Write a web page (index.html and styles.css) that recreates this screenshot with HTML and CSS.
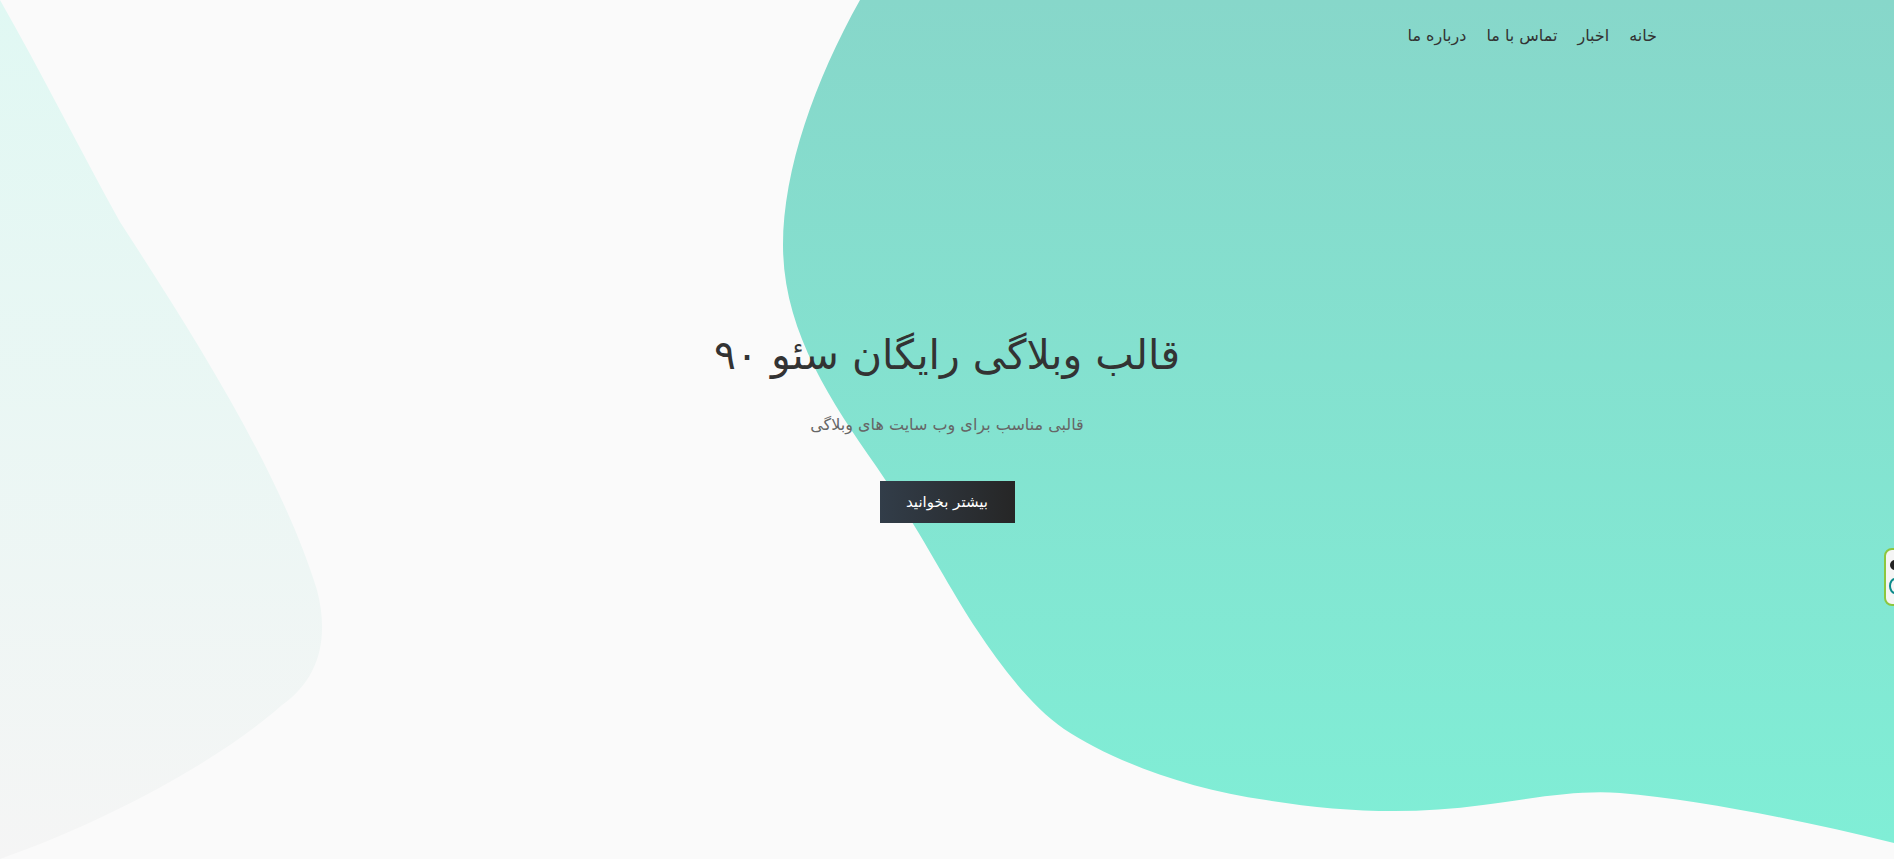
FILE: index.html
```html
<!DOCTYPE html>
<html lang="fa" dir="rtl">
<head>
<meta charset="utf-8">
<title>قالب وبلاگی رایگان سئو ۹۰</title>
<link rel="stylesheet" href="styles.css">
</head>
<body>
<div class="page">
  <svg class="bg" viewBox="0 0 1894 859" preserveAspectRatio="none" aria-hidden="true">
    <defs>
      <linearGradient id="g1" x1="0" y1="0" x2="0" y2="1">
        <stop offset="0" stop-color="#87d7ca"/>
        <stop offset="1" stop-color="#80eed6"/>
      </linearGradient>
      <linearGradient id="g2" x1="0" y1="0" x2="0" y2="1">
        <stop offset="0" stop-color="#e0f8f3"/>
        <stop offset="1" stop-color="#f5f5f5"/>
      </linearGradient>
    </defs>
    <path fill="url(#g2)" d="M0,0 C40,70 80,150 120,222 C190,330 280,470 317,590 C330,640 318,680 282,705 C220,760 110,820 0,859 Z"/>
    <path fill="url(#g1)" d="M860,0 C815,80 783,170 783,245 C783,330 830,400 876,466 C920,530 950,590 977,630 C1000,665 1030,705 1064,729 C1110,760 1190,790 1266,800 C1340,812 1410,815 1483,805 C1540,797 1580,790 1620,793 C1700,800 1800,820 1894,843 L1894,0 Z"/>
  </svg>

  <header class="header">
    <nav class="nav">
      <a href="#" class="nav-link">خانه</a>
      <a href="#" class="nav-link">اخبار</a>
      <a href="#" class="nav-link">تماس با ما</a>
      <a href="#" class="nav-link">درباره ما</a>
    </nav>
  </header>

  <main class="hero">
    <h1 class="hero-title">قالب وبلاگی رایگان سئو ۹۰</h1>
    <p class="hero-sub">قالبی مناسب برای وب سایت های وبلاگی</p>
    <a href="#" class="btn">بیشتر بخوانید</a>
  </main>

  <div class="widget" aria-hidden="true">
    <span class="widget-dot"></span>
    <span class="widget-c"></span>
  </div>
</div>
</body>
</html>
```

FILE: styles.css
```css
* { box-sizing: border-box; }
html, body {
  margin: 0;
  padding: 0;
  height: 100%;
}
body {
  background: #fafafa;
  font-family: "DejaVu Sans", "Noto Sans", sans-serif;
  color: #333;
  overflow: hidden;
}
.page {
  position: relative;
  height: 859px;
  overflow: hidden;
}
.bg {
  position: absolute;
  left: 0;
  top: 0;
  width: 100%;
  height: 100%;
  z-index: 0;
}
.header {
  position: relative;
  z-index: 1;
  max-width: 1420px;
  margin: 0 auto;
  padding-top: 25px;
}
.nav {
  display: flex;
  gap: 20px;
}
.nav-link {
  color: #333;
  text-decoration: none;
  font-size: 16px;
  line-height: 22px;
}
.hero {
  position: relative;
  z-index: 1;
  display: flex;
  flex-direction: column;
  align-items: center;
  padding-top: 279px;
}
.hero-title {
  margin: 0;
  font-weight: normal;
  font-size: 41px;
  line-height: 58px;
  color: #333;
}
.hero-sub {
  margin: 30px 0 0;
  font-size: 16px;
  line-height: 22px;
  color: #666;
}
.btn {
  margin-top: 45px;
  display: flex;
  align-items: center;
  justify-content: center;
  width: 135px;
  height: 42px;
  background: linear-gradient(90deg, #323d49, #262626);
  color: #fff;
  text-decoration: none;
  font-size: 15px;
  font-weight: normal;
}
.widget {
  position: absolute;
  z-index: 2;
  left: 1884px;
  top: 548px;
  width: 30px;
  height: 58px;
  border: 2px solid #8dc63f;
  border-radius: 8px;
  background: #f5f5f5;
}
.widget-dot {
  position: absolute;
  left: 4px;
  top: 10px;
  width: 10px;
  height: 10px;
  border-radius: 50%;
  background: #222;
}
.widget-c {
  position: absolute;
  left: 3px;
  top: 28px;
  width: 12px;
  height: 16px;
  border-radius: 50%;
  border: 2px solid #0a8a8a;
}
```
